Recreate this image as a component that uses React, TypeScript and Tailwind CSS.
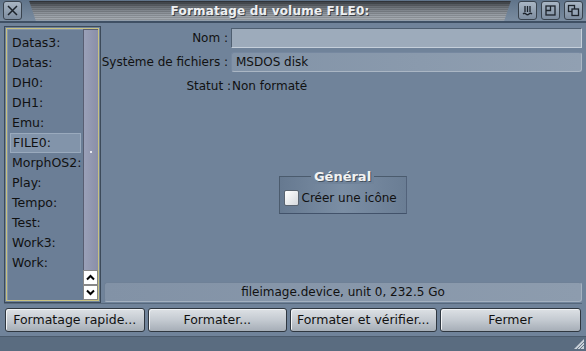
import React from "react";

const drives = [
  "Datas3:",
  "Datas:",
  "DH0:",
  "DH1:",
  "Emu:",
  "FILE0:",
  "MorphOS2:",
  "Play:",
  "Tempo:",
  "Test:",
  "Work3:",
  "Work:",
];

function TitleButton({ children }: { children: React.ReactNode }) {
  return (
    <div className="w-[19px] h-[19px] rounded-[3px] border border-[#39434e] bg-gradient-to-b from-[#a9b6c4] to-[#7d8da0] flex items-center justify-center">
      <svg width="13" height="13" viewBox="0 0 13 13" fill="none" stroke="#1c232b" strokeWidth="1.3">
        {children}
      </svg>
    </div>
  );
}

function Btn({ label, w }: { label: string; w: string }) {
  return (
    <button
      className={`${w} h-[24px] rounded-[3px] border border-[#2f3740] bg-gradient-to-b from-[#dde1e5] via-[#c4cad1] to-[#a6aeb7] text-[12.5px] text-[#111] shadow-[inset_1px_1px_0_#f2f4f6]`}
    >
      {label}
    </button>
  );
}

export default function App() {
  return (
    <div className="w-[586px] h-[351px] flex flex-col bg-[#70839a] font-['DejaVu_Sans',sans-serif] text-[12px] text-[#111] overflow-hidden select-none">
      {/* title bar */}
      <div className="h-[23px] flex items-center bg-gradient-to-b from-[#60748a] to-[#7a8ca0] border-b-2 border-[#3f5064] px-[3px] gap-[4px]">
        <div className="w-[19px] h-[19px] rounded-[3px] border border-[#39434e] bg-gradient-to-b from-[#a9b6c4] to-[#7d8da0] flex items-center justify-center">
          <svg width="13" height="13" viewBox="0 0 13 13" stroke="#1c232b" strokeWidth="1.5">
            <path d="M2 2 L11 11 M11 2 L2 11" />
          </svg>
        </div>
        <div className="flex-1 h-[20px] mx-[3px] flex items-center justify-center [clip-path:polygon(0_0,100%_0,98.6%_100%,1.4%_100%)] bg-[repeating-linear-gradient(to_bottom,rgba(0,0,0,0.14)_0_1px,transparent_1px_2px),linear-gradient(to_bottom,#34383d,#6d7379_30%,#989ea5_70%,#aab0b6)]">
          <span className="text-[12px] font-bold text-[#eef0f2] [text-shadow:1px_1px_0_#3a3e44] tracking-[0.2px]">
            Formatage du volume FILE0:
          </span>
        </div>
        <TitleButton>
          <path d="M4 2 V8 M6.5 2 V8 M9 2 V8 M2 10 Q3.5 8.5 5 10 T8 10 T11 10" />
        </TitleButton>
        <TitleButton>
          <rect x="2" y="2" width="9" height="9" />
          <path d="M2 6.5 H6.5 V2" />
        </TitleButton>
        <TitleButton>
          <rect x="1.5" y="1.5" width="6" height="6" />
          <rect x="5" y="5" width="6.5" height="6.5" fill="#95a4b5" />
        </TitleButton>
      </div>

      {/* main */}
      <div className="flex px-[4px] pt-[3px] h-[280px]">
        {/* volume list */}
        <div className="w-[97px] h-[277px] border border-[#3c4a5a] p-px">
          <div className="h-full border border-[#c8c180] flex">
            <div className="flex-1 bg-[#6b7e96] border-t border-l border-[#8494a8] pt-[3px] pl-[2px] pr-[2px] flex flex-col">
              {drives.map((d) => (
                <div
                  key={d}
                  className={`h-[20px] flex items-center pl-[2px] text-[12.5px] ${
                    d === "FILE0:"
                      ? "bg-[#8294aa] border border-[#9aaabd]"
                      : ""
                  }`}
                >
                  {d}
                </div>
              ))}
            </div>
            <div className="w-[15px] flex flex-col">
              <div className="flex-1 bg-gradient-to-r from-[#9aa0b8] to-[#8a8fa8] border-l border-t border-[#585e72] flex items-center justify-center">
                <span className="w-[2px] h-[2px] bg-[#e8e8ee] mt-[4px]"></span>
              </div>
              <div className="h-[15px] bg-white border border-[#888] flex items-center justify-center">
                <svg width="9" height="7" viewBox="0 0 9 7">
                  <path d="M1 5.5 L4.5 2 L8 5.5" stroke="#000" strokeWidth="2" fill="none" />
                </svg>
              </div>
              <div className="h-[15px] bg-white border border-[#888] flex items-center justify-center">
                <svg width="9" height="7" viewBox="0 0 9 7">
                  <path d="M1 1.5 L4.5 5 L8 1.5" stroke="#000" strokeWidth="2" fill="none" />
                </svg>
              </div>
            </div>
          </div>
        </div>

        {/* right side */}
        <div className="flex-1 flex flex-col pl-[2px] pt-[2px]">
          <div className="flex items-center h-[20px]">
            <div className="w-[128px] flex justify-end whitespace-nowrap pr-[3px]">Nom :</div>
            <div className="flex-1 h-[20px] bg-[#9dabbb] border border-[#4e5e70] border-r-[#c5cfda] border-b-[#c5cfda]"></div>
          </div>
          <div className="flex items-center h-[20px] mt-[4px]">
            <div className="w-[128px] flex justify-end whitespace-nowrap pr-[3px]">Système de fichiers :</div>
            <div className="flex-1 h-[20px] rounded-[3px] bg-gradient-to-r from-[#8293a7] to-[#91a0b2] border border-[#7688a0] border-r-[#aab6c4] border-b-[#aab6c4] flex items-center px-[4px]">
              MSDOS disk
            </div>
          </div>
          <div className="flex items-center h-[20px] mt-[4px]">
            <div className="w-[128px] flex justify-end whitespace-nowrap">Statut :</div>
            <div className="pl-px">Non formaté</div>
          </div>

          <div className="flex-1 flex items-center justify-center pt-[12px]">
            <div className="relative w-[128px] h-[38px] border border-[#4b5b6d] border-r-[#52627a] border-b-[#42526a] bg-gradient-to-r from-[#667990] via-[#7b8ea4] to-[#6a7d94] flex items-center pl-[4px]">
              <span className="absolute -top-[10px] left-0 right-0 text-center">
                <span className="px-[3px] bg-[#70839a] text-[13px] font-bold text-[#f2f2f2] [text-shadow:1px_1px_0_#45525f]">
                  Général
                </span>
              </span>
              <div className="w-[15px] h-[16px] rounded-[2px] border border-[#5a6470] bg-gradient-to-br from-[#ffffff] to-[#d6d9dd] mt-[5px]"></div>
              <span className="ml-[3px] mt-[5px]">Créer une icône</span>
            </div>
          </div>

          <div className="h-[20px] mb-[1px] ml-[1px] rounded-[3px] bg-gradient-to-r from-[#8292a6] to-[#8d9cae] border border-[#6f8197] border-r-[#a4b1c0] border-b-[#a4b1c0] flex items-center justify-center">
            fileimage.device, unit 0, 232.5 Go
          </div>
        </div>
      </div>

      {/* buttons */}
      <div className="border-t border-[#56687c] mx-[4px]"></div>
      <div className="flex gap-[3px] px-[5px] pt-[4px]">
        <Btn label="Formatage rapide..." w="w-[140px]" />
        <Btn label="Formater..." w="w-[140px]" />
        <Btn label="Formater et vérifier..." w="w-[147px]" />
        <Btn label="Fermer" w="w-[142px]" />
      </div>

      {/* bottom bar */}
      <div className="mt-[4px] flex-1 bg-[#5a6c80] border-t border-[#4a5a6c] flex justify-end items-end">
        <svg width="12" height="12" viewBox="0 0 12 12" className="mr-[1px] mb-[1px]">
          <path d="M11 1 L11 11 L1 11 Z" fill="#c8d0d8" />
          <path d="M11 4 L4 11 M11 7 L7 11" stroke="#6b7a8a" strokeWidth="1" />
        </svg>
      </div>
    </div>
  );
}
